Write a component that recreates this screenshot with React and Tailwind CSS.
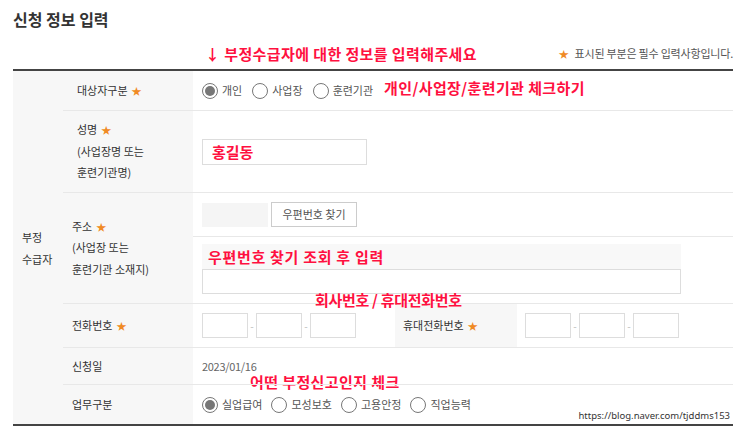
const font = { fontFamily: '"Noto Sans CJK KR", "Noto Sans", sans-serif' };

function Star() {
  return <span className="ml-[4px] text-[10px] text-[#f08a24]">★</span>;
}

function Radio({ checked, label }) {
  return (
    <label className="flex items-center gap-[4px] text-[11px] text-[#555]">
      <span className="flex h-[16px] w-[16px] items-center justify-center rounded-full border border-[#777] bg-white">
        {checked && <span className="h-[10px] w-[10px] rounded-full bg-[#777]" />}
      </span>
      {label}
    </label>
  );
}

function Box({ className }) {
  return <div className={"h-[25px] border border-[#ddd] bg-white " + className} />;
}

function Phone() {
  return (
    <div className="flex items-center">
      <Box className="w-[46px]" />
      <span className="w-[8px] text-center text-[10px] text-[#bbb]">-</span>
      <Box className="w-[46px]" />
      <span className="w-[8px] text-center text-[10px] text-[#bbb]">-</span>
      <Box className="w-[46px]" />
    </div>
  );
}

function Note({ children, className = "" }) {
  return (
    <span className={"text-[15px] font-bold leading-none text-[#ff1040] " + className}>
      {children}
    </span>
  );
}

export default function App() {
  return (
    <div className="h-[433px] w-[743px] overflow-hidden bg-white" style={font}>
      <div className="ml-[13px] w-[720px]">
        <div className="h-[38px] pt-[7px] text-[16px] font-bold text-[#333]">신청 정보 입력</div>
        <div className="flex h-[31px] items-center">
          <Note className="ml-[192px] tracking-[0.4px]">↓ 부정수급자에 대한 정보를 입력해주세요</Note>
          <span className="ml-auto text-[11px] tracking-[-0.2px] text-[#555]">
            <span className="mr-[6px] text-[10px] text-[#f08a24]">★</span>
            표시된 부분은 필수 입력사항입니다.
          </span>
        </div>

        <div className="flex border-y-2 border-[#444] text-[11px] text-[#333]">
          <div className="flex w-[50px] items-center bg-[#f7f7f7] pl-[9px] leading-[22px]">
            <div>
              부정
              <br />
              수급자
            </div>
          </div>

          <div className="relative flex-1">
            {/* 대상자구분 */}
            <div className="flex h-[39px]">
              <div className="flex w-[130px] items-center bg-[#f7f7f7] pl-[14px]">
                대상자구분
                <Star />
              </div>
              <div className="flex flex-1 items-center gap-[10px] pl-[9px]">
                <Radio checked label="개인" />
                <Radio label="사업장" />
                <Radio label="훈련기관" />
                <Note className="ml-[1px] mt-[-6px] tracking-[0.4px]">개인/사업장/훈련기관 체크하기</Note>
              </div>
            </div>

            {/* 성명 */}
            <div className="flex h-[82px] border-t border-[#e8e8e8]">
              <div className="flex w-[130px] items-center bg-[#f7f7f7] pl-[14px] leading-[21.5px]">
                <div>
                  성명
                  <Star />
                  <br />
                  (사업장명 또는
                  <br />
                  훈련기관명)
                </div>
              </div>
              <div className="flex flex-1 items-center pl-[9px]">
                <div className="flex h-[26px] w-[165px] items-center border border-[#ddd] pl-[9px]">
                  <Note className="text-[14px]">홍길동</Note>
                </div>
              </div>
            </div>

            {/* 주소 */}
            <div className="flex h-[111px] border-t border-[#e8e8e8]">
              <div className="flex w-[130px] items-center bg-[#f7f7f7] pl-[9px] leading-[21.5px]">
                <div>
                  주소
                  <Star />
                  <br />
                  (사업장 또는
                  <br />
                  훈련기관 소재지)
                </div>
              </div>
              <div className="flex flex-1 flex-col">
                <div className="flex h-[43px] items-center gap-[3px] pl-[9px]">
                  <div className="h-[24px] w-[66px] bg-[#f5f5f5]" />
                  <button
                    type="button"
                    className="h-[25px] w-[86px] border border-[#ccc] bg-white text-[11px] text-[#555]"
                  >
                    우편번호 찾기
                  </button>
                </div>
                <div className="flex flex-1 flex-col border-t border-[#e8e8e8] pl-[9px] pt-[7px]">
                  <div className="flex h-[25px] w-[479px] items-center bg-[#f8f8f8] pl-[6px]">
                    <Note className="tracking-[0.7px]">우편번호 찾기 조회 후 입력</Note>
                  </div>
                  <Box className="w-[479px]" />
                </div>
              </div>
            </div>

            {/* 전화번호 */}
            <div className="relative flex h-[44px] border-t border-[#e8e8e8]">
              <div className="flex w-[130px] items-center bg-[#f7f7f7] pl-[9px]">
                전화번호
                <Star />
              </div>
              <div className="flex w-[202px] items-center pl-[9px]">
                <Phone />
              </div>
              <div className="flex w-[122px] items-center bg-[#f7f7f7] pl-[8px]">
                휴대전화번호
                <Star />
              </div>
              <div className="flex flex-1 items-center pl-[8px]">
                <Phone />
              </div>
              <Note className="absolute left-[252px] top-[-12px] tracking-[-0.3px]">회사번호 / 휴대전화번호</Note>
            </div>

            {/* 신청일 */}
            <div className="relative flex h-[37px] border-t border-[#e8e8e8]">
              <div className="flex w-[130px] items-center bg-[#f7f7f7] pl-[9px]">신청일</div>
              <div className="flex flex-1 items-center pl-[9px] tracking-[-0.3px] text-[#666]">2023/01/16</div>
              <Note className="absolute left-[187px] top-[26px] tracking-[0.4px]">어떤 부정신고인지 체크</Note>
            </div>

            {/* 업무구분 */}
            <div className="relative flex h-[40px] border-t border-[#e8e8e8]">
              <div className="flex w-[130px] items-center bg-[#f7f7f7] pl-[9px]">업무구분</div>
              <div className="flex flex-1 items-center gap-[9px] pl-[9px]">
                <Radio checked label="실업급여" />
                <Radio label="모성보호" />
                <Radio label="고용안정" />
                <Radio label="직업능력" />
              </div>
              <span
                className="absolute bottom-[1px] right-[3px] text-[9.5px] text-[#333]"
                style={{ fontFamily: '"Noto Sans", sans-serif' }}
              >
                https://blog.naver.com/tjddms153
              </span>
            </div>
          </div>
        </div>
      </div>
    </div>
  );
}
